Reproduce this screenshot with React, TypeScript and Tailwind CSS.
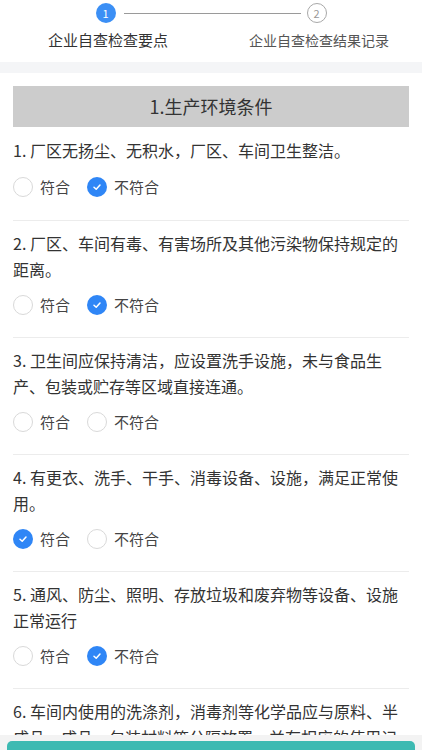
import { useState } from "react";

const ITEMS = [
  { text: "1. 厂区无扬尘、无积水，厂区、车间卫生整洁。", value: "no" },
  { text: "2. 厂区、车间有毒、有害场所及其他污染物保持规定的距离。", value: "no" },
  { text: "3. 卫生间应保持清洁，应设置洗手设施，未与食品生产、包装或贮存等区域直接连通。", value: "" },
  { text: "4. 有更衣、洗手、干手、消毒设备、设施，满足正常使用。", value: "yes" },
  { text: "5. 通风、防尘、照明、存放垃圾和废弃物等设备、设施正常运行", value: "no" },
  { text: "6. 车间内使用的洗涤剂，消毒剂等化学品应与原料、半成品、成品、包装材料等分隔放置，并有相应的使用记录。", value: "" },
];

function Radio({ checked, label, onClick }: { checked: boolean; label: string; onClick: () => void }) {
  return (
    <button onClick={onClick} className="flex items-center gap-[7px] mr-[17px]">
      {checked ? (
        <span className="w-5 h-5 rounded-full bg-[#2f86f6] flex items-center justify-center">
          <svg width="10" height="10" viewBox="0 0 10 10">
            <path d="M2 5.2 L4.2 7.2 L8 3" fill="none" stroke="#fff" strokeWidth="1.5" strokeLinecap="round" strokeLinejoin="round" />
          </svg>
        </span>
      ) : (
        <span className="w-5 h-5 rounded-full border border-[#d9d9d9] bg-white" />
      )}
      <span className="text-[15px] text-[#444] leading-5">{label}</span>
    </button>
  );
}

export default function App() {
  const [values, setValues] = useState(ITEMS.map((i) => i.value));

  const setValue = (idx: number, v: string) => {
    const next = [...values];
    next[idx] = v;
    setValues(next);
  };

  return (
    <div className="min-h-screen bg-white text-[#333]" style={{ fontFamily: '"Noto Sans CJK SC", "Noto Sans", sans-serif' }}>
      {/* 步骤条 */}
      <div className="flex pt-[3px] pb-[12px]">
        <div className="w-1/2 flex flex-col items-center relative">
          <span className="w-5 h-5 rounded-full bg-[#3b8ff5] text-white text-[11px] leading-5 text-center">1</span>
          <span className="absolute top-[10px] left-[calc(50%+18px)] w-[177px] h-px bg-[#9a9a9a]" />
          <span className="mt-[7px] text-[15px] leading-5 text-[#333] pl-[5px]">企业自查检查要点</span>
        </div>
        <div className="w-1/2 flex flex-col items-center">
          <span className="w-5 h-5 rounded-full border border-[#a8a8a8] text-[#999] text-[11px] leading-[18px] text-center">2</span>
          <span className="mt-[7px] text-[14px] leading-5 text-[#555] pl-[5px]">企业自查检查结果记录</span>
        </div>
      </div>
      <div className="h-[11px] bg-[#f4f5f7]" />

      <div className="px-[13px] pt-[13px] pb-[60px]">
        <div className="h-[41px] bg-[#cccccc] flex items-center justify-center text-[18px] text-[#333]">
          1.生产环境条件
        </div>

        {ITEMS.map((item, idx) => (
          <div key={idx} className={idx === 0 ? "pt-[10px] pb-[23px]" : "pt-[9px] pb-[22px] border-t border-[#ececec]"}>
            <p className="text-[16px] leading-[26px] text-[#333]">{item.text}</p>
            <div className={`flex ${idx === 0 ? "mt-[14px]" : "mt-[13px]"}`}>
              <Radio checked={values[idx] === "yes"} label="符合" onClick={() => setValue(idx, "yes")} />
              <Radio checked={values[idx] === "no"} label="不符合" onClick={() => setValue(idx, "no")} />
            </div>
          </div>
        ))}
      </div>

      {/* 底部按钮 */}
      <div className="fixed left-0 right-0 top-[735px] h-[60px] bg-[#f3f3f3] px-[7px] pt-[6px]">
        <button className="w-full h-[44px] rounded-t-[5px] bg-[#3dbab2] text-white text-[16px]">下一步</button>
      </div>
    </div>
  );
}
